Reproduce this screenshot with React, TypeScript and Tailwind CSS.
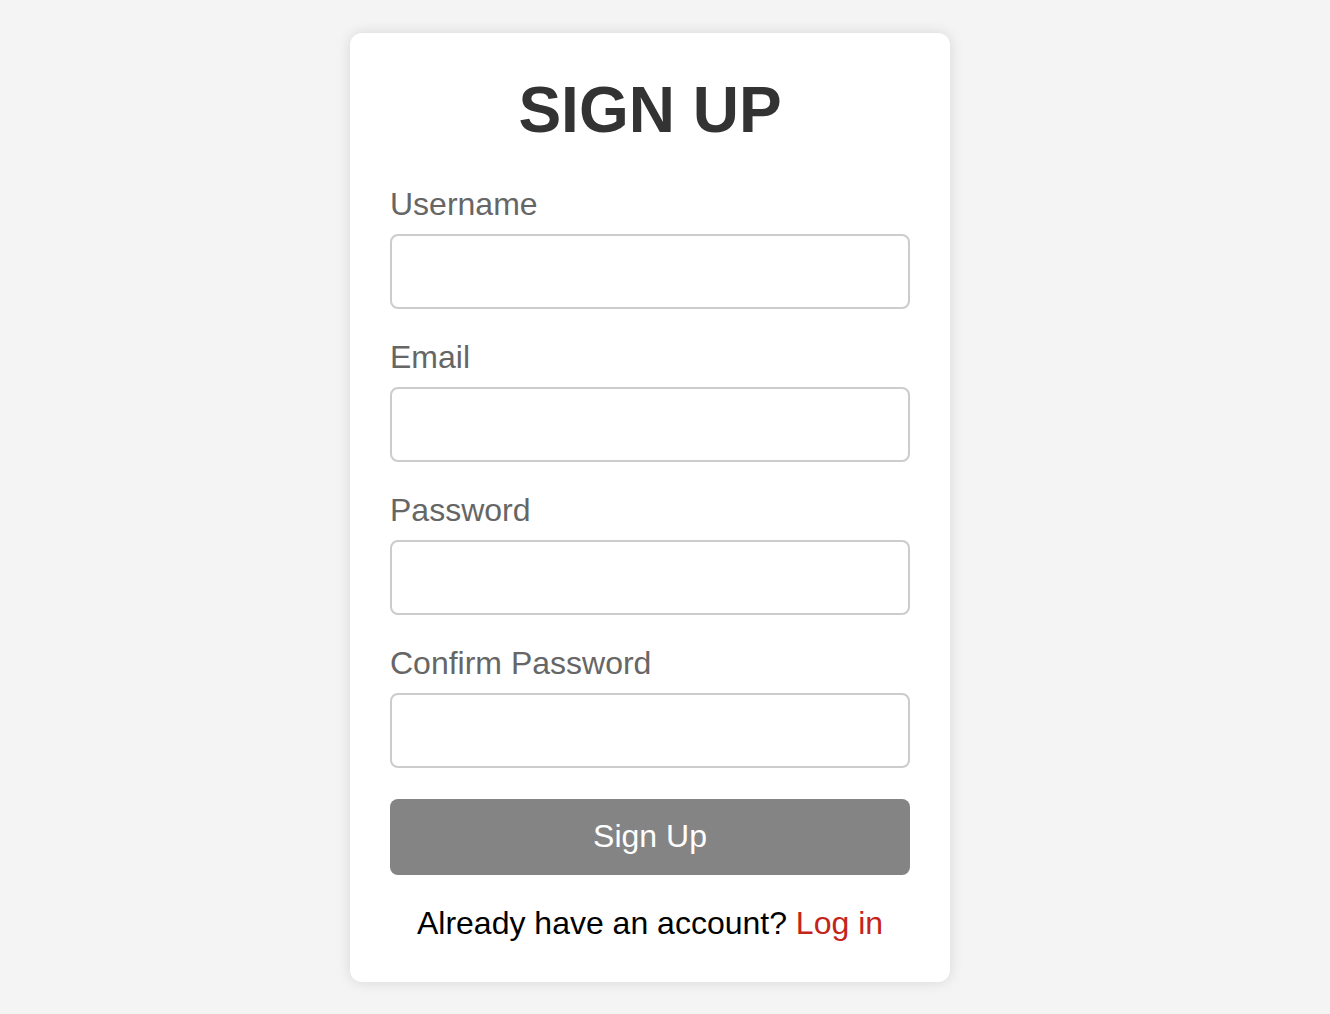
import React from "react";

function Field({ label, type, last }: { label: string; type: string; last?: boolean }) {
  return (
    <div className={last ? "mb-[31px]" : "mb-[30px]"}>
      <label className="block text-[32px] leading-[37px] text-[#666666] mb-[11px]">{label}</label>
      <input
        type={type}
        className="block w-full h-[75px] border-2 border-[#cccccc] rounded-[8px] bg-white px-4 text-[32px] outline-none"
      />
    </div>
  );
}

export default function App() {
  return (
    <div
      className="min-h-screen w-full bg-[#f4f4f4] flex items-center justify-center pr-[30px]"
      style={{ fontFamily: '"Liberation Sans", Arial, Helvetica, sans-serif' }}
    >
      <div className="w-[600px] bg-white rounded-[12px] shadow-[0_0_14px_rgba(0,0,0,0.12)] px-[40px] pt-[40px] pb-[40px]">
        <h1 className="text-center text-[64px] leading-[74px] font-bold text-[#333333] mb-[39px]">SIGN UP</h1>
        <form onSubmit={(e) => e.preventDefault()}>
          <Field label="Username" type="text" />
          <Field label="Email" type="email" />
          <Field label="Password" type="password" />
          <Field label="Confirm Password" type="password" last />
          <button
            type="submit"
            className="block w-full h-[76px] rounded-[8px] bg-[#848484] text-white text-[32px] leading-[37px]"
          >
            Sign Up
          </button>
        </form>
        <p className="mt-[30px] text-center text-[32px] leading-[37px] text-black">
          Already have an account? <a href="#" className="text-[#c4241a]">Log in</a>
        </p>
      </div>
    </div>
  );
}
